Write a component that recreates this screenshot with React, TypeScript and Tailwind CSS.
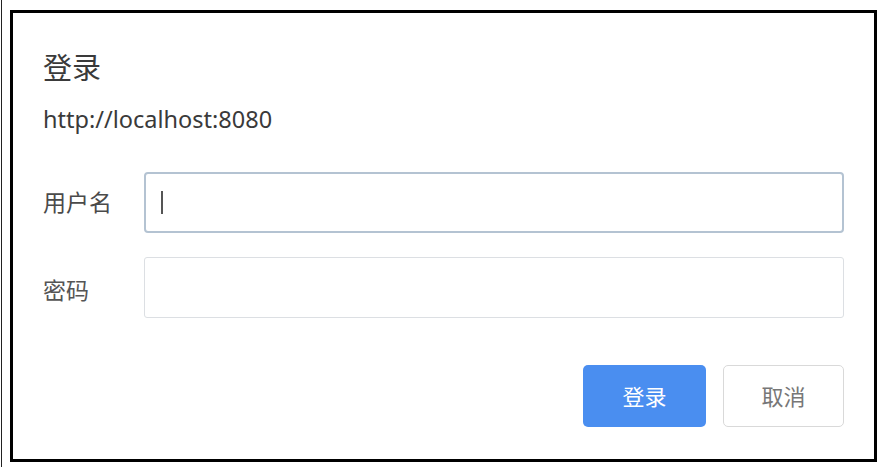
export default function App() {
  return (
    <div className="relative w-[883px] h-[467px] bg-white overflow-hidden" style={{ fontFamily: '"Noto Sans", "Noto Sans CJK SC", sans-serif' }}>
      {/* thin edge line of the original capture */}
      <div className="absolute left-[1px] top-0 h-full w-[1px] bg-[#222]" />
      <div className="absolute left-[10px] top-[10px] w-[867px] h-[452px] border-[3px] border-black bg-white">
        <div className="flex flex-col pl-[30px] pr-[30px] pt-[37px]">
          <h1 className="h-[36px] leading-[36px] text-[29px] text-[#3a3a3a] font-normal">登录</h1>
          <p className="mt-[17px] h-[32px] leading-[32px] text-[23.5px] text-[#3a3a3a]">http://localhost:8080</p>

          <div className="mt-[37px] flex items-center">
            <label className="w-[101px] text-[23px] text-[#4a4a4a]">用户名</label>
            <div className="flex-1 h-[61px] rounded-[4px] border-2 border-[#b4c3d2] bg-white flex items-center pl-[15px]">
              <span className="block w-[1.5px] h-[23px] bg-[#555]" />
            </div>
          </div>

          <div className="mt-[24px] flex items-center">
            <label className="w-[101px] text-[23px] text-[#555] pt-[5px]">密码</label>
            <div className="flex-1 h-[61px] rounded-[3px] border border-[#dcdfe3] bg-white" />
          </div>

          <div className="mt-[47px] flex justify-end gap-[17px]">
            <button className="w-[123px] h-[62px] rounded-[5px] bg-[#4a8ef0] text-white text-[22px]">登录</button>
            <button className="w-[121px] h-[62px] rounded-[5px] border border-[#d9d9d9] bg-white text-[#777] text-[22px]">取消</button>
          </div>
        </div>
      </div>
    </div>
  )
}
